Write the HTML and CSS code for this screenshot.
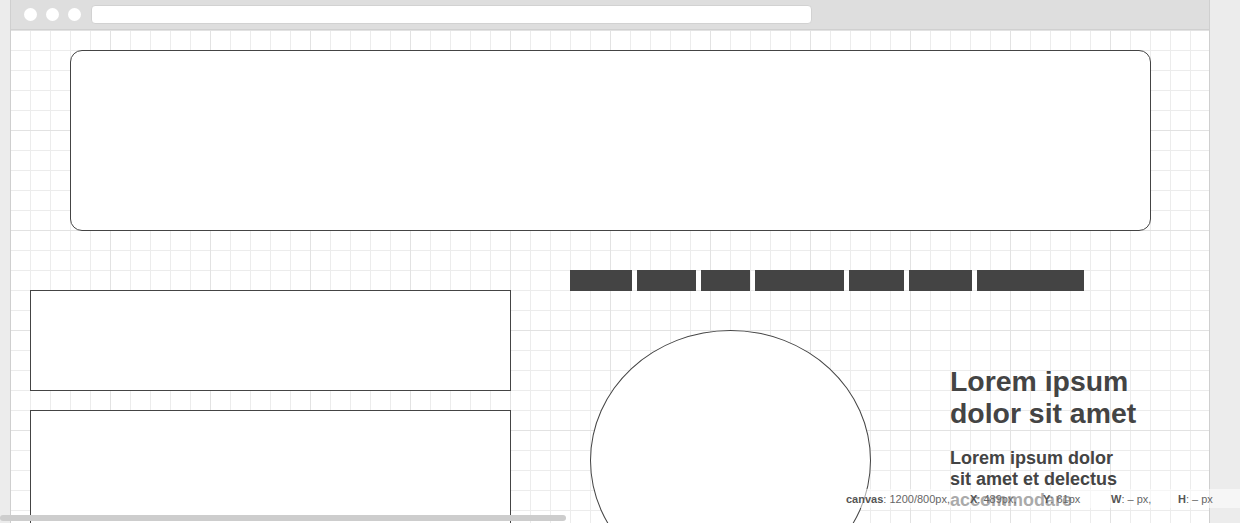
FILE: index.html
```html
<!DOCTYPE html>
<html>
<head>
<meta charset="utf-8">
<link rel="stylesheet" href="styles.css">
</head>
<body>
<div class="window">
  <div class="topbar">
    <span class="dot"></span><span class="dot"></span><span class="dot"></span>
    <div class="url"></div>
  </div>
  <div class="canvas">
    <div class="hero"></div>
    <div class="lower">
      <div class="left-col">
        <div class="box box-a"></div>
        <div class="box box-b"></div>
      </div>
      <div class="right-col">
        <div class="nav">
          <span class="nav-item" style="width:62px"></span>
          <span class="nav-item" style="width:59px"></span>
          <span class="nav-item" style="width:49px"></span>
          <span class="nav-item" style="width:89px"></span>
          <span class="nav-item" style="width:55px"></span>
          <span class="nav-item" style="width:63px"></span>
          <span class="nav-item" style="width:107px"></span>
        </div>
        <div class="feature">
          <div class="ellipse"></div>
          <div class="copy">
            <h1 class="title">Lorem ipsum dolor sit amet</h1>
            <p class="subtitle">Lorem ipsum dolor sit amet et delectus accommodare</p>
          </div>
        </div>
      </div>
    </div>
  </div>
</div>
<div class="status">
  <span class="stat stat-canvas"><b>canvas</b>: 1200/800px,</span>
  <span class="stat stat-x"><b>X</b>: 489px,</span>
  <span class="stat stat-y"><b>Y</b>: 61px</span>
  <span class="stat stat-w"><b>W</b>: – px,</span>
  <span class="stat stat-h"><b>H</b>: – px</span>
</div>
<div class="scrollbar"></div>
</body>
</html>
```
FILE: styles.css
```css
html, body {
  margin: 0;
  padding: 0;
  height: 523px;
  overflow: hidden;
}
body {
  background: #ececec;
  font-family: "Liberation Sans", Arial, sans-serif;
  position: relative;
}
.window {
  margin-left: 10px;
  width: 1200px;
  box-sizing: border-box;
  border-left: 1px solid #cfcfcf;
  border-right: 1px solid #cfcfcf;
  height: 523px;
  background: #fff;
}
.topbar {
  height: 30px;
  background: #dedede;
  display: flex;
  align-items: center;
  padding-left: 13px;
  box-sizing: border-box;
  border-bottom: 1px solid #d0d0d0;
}
.dot {
  width: 13px;
  height: 13px;
  border-radius: 50%;
  background: #fff;
  margin-right: 9px;
  flex: none;
}
.url {
  margin-left: 1px;
  width: 721px;
  height: 19px;
  background: #fff;
  border-radius: 4px;
  border: 1px solid #d2d2d2;
  box-sizing: border-box;
}
.canvas {
  height: 493px;
  background-color: #fff;
  background-image:
    linear-gradient(to right, #e2e2e2 1px, transparent 1px),
    linear-gradient(to bottom, #e2e2e2 1px, transparent 1px),
    linear-gradient(to right, #ececec 1px, transparent 1px),
    linear-gradient(to bottom, #ececec 1px, transparent 1px);
  background-size: 100px 100px, 100px 100px, 20px 20px, 20px 20px;
  background-position: -1px 0, -1px 0, -1px 0, -1px 0;
  padding-top: 20px;
  box-sizing: border-box;
}
.hero {
  margin-left: 59px;
  width: 1081px;
  height: 181px;
  box-sizing: border-box;
  border: 1px solid #444;
  border-radius: 12px;
  background: #fff;
}
.lower {
  display: flex;
  margin-top: 39px;
  padding-left: 19px;
  gap: 59px;
}
.left-col {
  width: 481px;
  padding-top: 20px;
  display: flex;
  flex-direction: column;
  gap: 19px;
}
.box {
  border: 1px solid #444;
  background: #fff;
  box-sizing: border-box;
}
.box-a { height: 101px; }
.box-b { height: 200px; }
.nav {
  display: flex;
  gap: 5px;
  height: 21px;
}
.nav-item {
  display: block;
  height: 21px;
  background: #444;
}
.feature {
  display: flex;
  margin-top: 39px;
  padding-left: 20px;
  gap: 79px;
}
.ellipse {
  width: 281px;
  height: 261px;
  border: 1px solid #444;
  border-radius: 50%;
  box-sizing: border-box;
  background: #fff;
  flex: none;
}
.copy {
  width: 200px;
  padding-top: 35px;
  color: #444;
}
.title {
  margin: 0;
  font-size: 28.4px;
  line-height: 32px;
  font-weight: bold;
}
.subtitle {
  margin: 19px 0 0;
  max-width: 180px;
  font-size: 18px;
  line-height: 21px;
  font-weight: bold;
}
.status {
  position: absolute;
  left: 840px;
  top: 489px;
  width: 400px;
  height: 19px;
  background: rgba(255, 255, 255, 0.55);
  display: flex;
  align-items: center;
  padding-left: 6px;
  box-sizing: border-box;
  font-size: 11px;
  color: #666;
}
.stat { flex: none; white-space: nowrap; }
.stat b { color: #555; }
.stat-canvas { width: 124px; }
.stat-x { width: 73px; }
.stat-y { width: 68px; }
.stat-w { width: 67px; }
.scrollbar {
  position: absolute;
  left: 0;
  top: 515px;
  width: 566px;
  height: 6px;
  border-radius: 3px;
  background: #cdcdcd;
}
```
